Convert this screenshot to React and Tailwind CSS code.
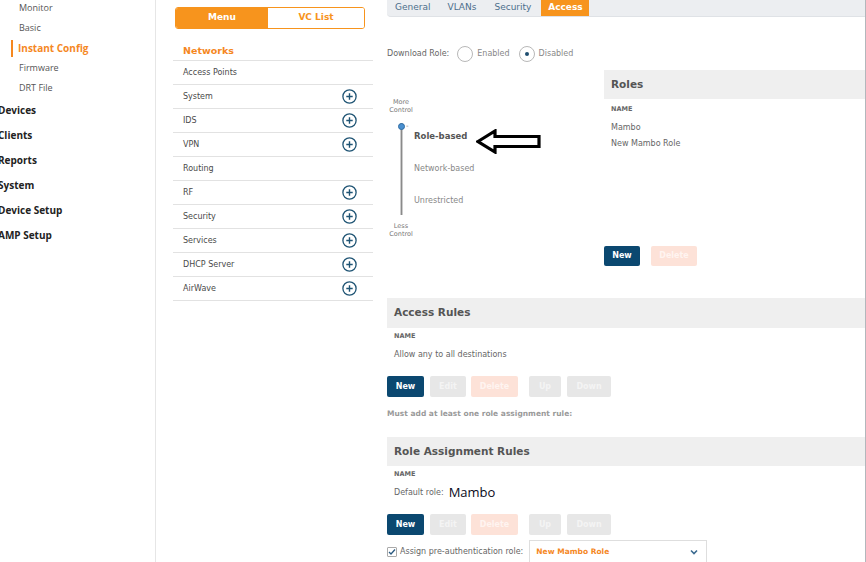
import React from "react";

const Plus = () => (
  <svg width="15" height="15" viewBox="0 0 15 15" className="shrink-0">
    <circle cx="7.5" cy="7.5" r="6.6" fill="none" stroke="#1f5474" strokeWidth="1.3" />
    <path d="M7.5 4.3v6.4M4.3 7.5h6.4" stroke="#1f5474" strokeWidth="1.4" />
  </svg>
);

const menuRows = [
  ["Access Points", false],
  ["System", true],
  ["IDS", true],
  ["VPN", true],
  ["Routing", false],
  ["RF", true],
  ["Security", true],
  ["Services", true],
  ["DHCP Server", true],
  ["AirWave", true],
];

const Buttons = () => (
  <div className="flex items-center h-[21px] text-[8px] font-bold text-white">
    <div className="w-[37px] h-full rounded-[2px] bg-[#0b4870] flex items-center justify-center">New</div>
    <div className="ml-[6px] w-[36px] h-full rounded-[2px] bg-[#e7e7e7] flex items-center justify-center text-[#f4f4f4]">Edit</div>
    <div className="ml-[5px] w-[47px] h-full rounded-[2px] bg-[#fde2d8] flex items-center justify-center text-[#fff4f0]">Delete</div>
    <div className="ml-[11px] w-[32px] h-full rounded-[2px] bg-[#e7e7e7] flex items-center justify-center text-[#f4f4f4]">Up</div>
    <div className="ml-[6px] w-[44px] h-full rounded-[2px] bg-[#e7e7e7] flex items-center justify-center text-[#f4f4f4]">Down</div>
  </div>
);

export default function App() {
  return (
    <div className="w-[866px] h-[562px] overflow-hidden bg-white flex" style={{ fontFamily: '"DejaVu Sans", Verdana, sans-serif' }}>
      {/* Sidebar */}
      <div className="w-[156px] h-full border-r border-[#e6e6e6] shrink-0 overflow-hidden" style={{ fontFamily: '"Open Sans", sans-serif' }}>
        <div className="mt-[-2px] text-[9px] text-[#555]">
          <div className="h-[20px] flex items-center pl-[19px]">Monitor</div>
          <div className="h-[20px] flex items-center pl-[19px]">Basic</div>
          <div className="h-[20px] flex items-center pl-[11px]">
            <div className="w-[2px] h-[17px] bg-[#f5881f] mr-[5px]" />
            <span className="text-[10px] font-bold text-[#f5881f]">Instant Config</span>
          </div>
          <div className="h-[20px] flex items-center pl-[19px]">Firmware</div>
          <div className="h-[20px] flex items-center pl-[19px]">DRT File</div>
        </div>
        <div className="text-[10px] font-bold text-[#222] ml-[-2px]">
          {["Devices", "Clients", "Reports", "System", "Device Setup", "AMP Setup"].map((t) => (
            <div key={t} className="h-[25px] flex items-center">{t}</div>
          ))}
        </div>
      </div>

      {/* Middle menu */}
      <div className="w-[217px] shrink-0 pl-[17px]">
        <div className="mt-[7px] ml-[2px] w-[190px] h-[22px] flex rounded-[3px] border border-[#f7941d] overflow-hidden text-[9px] font-bold">
          <div className="w-[92px] bg-[#f7941d] text-white flex items-center justify-center">Menu</div>
          <div className="flex-1 text-[#f7941d] flex items-center justify-center bg-white">VC List</div>
        </div>
        <div className="mt-[10px] w-[200px] h-[22px] border-b border-[#e2e2e2] flex items-end pb-[2px] pl-[10px] text-[9.5px] font-bold text-[#f5881f]">Networks</div>
        {menuRows.map(([t, p]) => (
          <div key={t} className="w-[200px] h-[24px] border-b border-[#e2e2e2] flex items-center justify-between pl-[10px] pr-[16px] text-[8px] text-[#4a4a4a]">
            <span>{t}</span>
            {p && <Plus />}
          </div>
        ))}
      </div>

      {/* Right content */}
      <div className="flex-1 pl-[14px]">
        <div className="border-r border-[#b3b7bc] h-full overflow-hidden">
          {/* Tabs */}
          <div className="h-[17px] bg-[#eceef1] border-b border-[#dfe2e6] rounded-bl-[4px] flex items-stretch text-[9px] text-[#4d6f8c]">
            <div className="pl-[8px] flex items-center">General</div>
            <div className="pl-[17px] flex items-center">VLANs</div>
            <div className="pl-[18px] flex items-center">Security</div>
            <div className="ml-[10px] w-[48px] bg-[#f7941d] text-white font-bold flex items-center justify-center">Access</div>
          </div>

          {/* Download role */}
          <div className="mt-[28px] h-[18px] flex items-center text-[8px] text-[#666]">
            <span>Download Role:</span>
            <div className="ml-[8px] w-[16px] h-[16px] rounded-full border border-[#b8b8b8]" />
            <span className="ml-[4px] text-[#888]">Enabled</span>
            <div className="ml-[9px] w-[16px] h-[16px] rounded-full border border-[#b8b8b8] flex items-center justify-center">
              <div className="w-[4px] h-[4px] rounded-full bg-[#1f4e70]" />
            </div>
            <span className="ml-[4px] text-[#888]">Disabled</span>
          </div>

          {/* Slider + Roles */}
          <div className="mt-[7px] flex h-[196px]">
            <div className="w-[217px] shrink-0 relative">
              <div className="mt-[28px] w-[28px] text-center text-[6.5px] leading-[8px] text-[#777]">More<br />Control</div>
              <div className="mt-[9px] flex">
                <div className="w-[28px] flex flex-col items-center relative">
                  <div className="w-[3px] h-[92px] bg-[#8a8a8a] border-x border-[#ccc]" />
                  <div className="absolute top-[0px] left-[10.5px] w-[7px] h-[7px] rounded-full bg-[#4a90d0] border border-[#2f6da3]" />
                  <div className="absolute top-[-1px] left-[19px] text-[7px] text-[#777] leading-[8px]">-</div>
                </div>
                <div className="flex flex-col text-[8px] text-[#888] ml-[-1px]">
                  <div className="h-[20px] flex items-end font-bold text-[#555] text-[8.5px]">Role-based</div>
                  <div className="h-[32px] flex items-end">Network-based</div>
                  <div className="h-[32px] flex items-end">Unrestricted</div>
                </div>
              </div>
              <div className="mt-[7px] w-[28px] text-center text-[6.5px] leading-[8px] text-[#777]">Less<br />Control</div>
              <svg className="absolute left-[89px] top-[59px]" width="66" height="25" viewBox="0 0 66 25">
                <polygon points="2,12.5 19,2 19,7.5 63,7.5 63,17.5 19,17.5 19,23" fill="white" stroke="black" strokeWidth="3.2" strokeLinejoin="miter" />
              </svg>
            </div>
            <div className="flex-1 flex flex-col">
              <div className="h-[29px] shrink-0 bg-[#efefef] flex items-center pl-[7px] text-[10.5px] font-bold text-[#555]">Roles</div>
              <div className="mt-[6px] h-[10px] flex items-center pl-[7px] text-[6.5px] font-bold text-[#666]">NAME</div>
              <div className="mt-[5px] h-[16px] flex items-center pl-[7px] text-[8px] text-[#666]">Mambo</div>
              <div className="h-[16px] flex items-center pl-[7px] text-[8px] text-[#666]">New Mambo Role</div>
              <div className="mt-auto flex h-[20px] shrink-0 text-[8px] font-bold">
                <div className="w-[36px] rounded-[2px] bg-[#0b4870] text-white flex items-center justify-center">New</div>
                <div className="ml-[11px] w-[46px] rounded-[2px] bg-[#fde2d8] text-[#fff4f0] flex items-center justify-center">Delete</div>
              </div>
            </div>
          </div>

          {/* Access Rules */}
          <div className="mt-[32px] h-[30px] bg-[#efefef] flex items-center pl-[7px] text-[10.5px] font-bold text-[#555]">Access Rules</div>
          <div className="mt-[4px] h-[10px] flex items-center pl-[7px] text-[6.5px] font-bold text-[#666]">NAME</div>
          <div className="mt-[5px] h-[16px] flex items-center pl-[7px] text-[8px] text-[#666]">Allow any to all destinations</div>
          <div className="mt-[13px]"><Buttons /></div>
          <div className="mt-[11px] h-[12px] flex items-center text-[7.5px] font-bold text-[#9a9a9a]">Must add at least one role assignment rule:</div>

          {/* Role Assignment Rules */}
          <div className="mt-[17px] h-[29px] bg-[#efefef] flex items-center pl-[7px] text-[10.5px] font-bold text-[#555]">Role Assignment Rules</div>
          <div className="mt-[4px] h-[10px] flex items-center pl-[7px] text-[6.5px] font-bold text-[#666]">NAME</div>
          <div className="mt-[4px] h-[18px] flex items-center pl-[7px] text-[8px] text-[#666]">
            <span>Default role:</span>
            <span className="ml-[5px] text-[13px] text-[#0a0a1a]" style={{ fontFamily: '"Open Sans", sans-serif' }}>Mambo</span>
          </div>
          <div className="mt-[12px]"><Buttons /></div>
          <div className="mt-[5px] h-[24px] flex items-center text-[8px] text-[#666]">
            <div className="w-[10px] h-[10px] border border-[#aaa] rounded-[1px] flex items-center justify-center">
              <svg width="8" height="8" viewBox="0 0 8 8"><path d="M1 4l2 2 4-4.5" fill="none" stroke="#2a5a80" strokeWidth="1.3" /></svg>
            </div>
            <span className="ml-[3px]">Assign pre-authentication role:</span>
            <div className="ml-[6px] w-[178px] h-full border border-[#dedede] flex items-center justify-between pl-[6px] pr-[8px]">
              <span className="font-bold text-[#f5881f] text-[7.5px]">New Mambo Role</span>
              <svg width="8" height="6" viewBox="0 0 8 6"><path d="M1 1.5l3 3 3-3" fill="none" stroke="#3b6a90" strokeWidth="1.6" /></svg>
            </div>
          </div>
        </div>
      </div>
    </div>
  );
}
